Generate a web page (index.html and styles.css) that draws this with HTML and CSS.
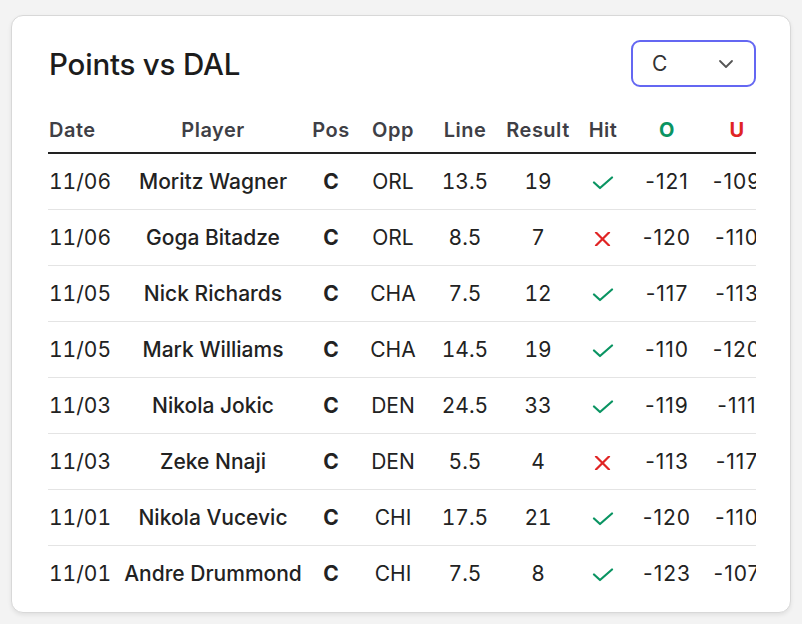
FILE: index.html
```html
<!DOCTYPE html>
<html>
<head>
<meta charset="utf-8">
<link rel="stylesheet" href="styles.css">
</head>
<body>
<div class="card">
  <div class="card-head">
    <h2 class="title">Points vs DAL</h2>
    <div class="select">
      <span class="select-value">C</span>
      <svg class="chev" width="16" height="10" viewBox="0 0 16 10"><path d="M2 2 L8 8 L14 2" fill="none" stroke="#555" stroke-width="1.8" stroke-linecap="round" stroke-linejoin="round"/></svg>
    </div>
  </div>
  <div class="scroller">
    <table class="tbl">
      <colgroup>
        <col class="c-date"><col class="c-player"><col class="c-pos"><col class="c-opp"><col class="c-line"><col class="c-res"><col class="c-hit"><col class="c-o"><col class="c-u">
      </colgroup>
      <thead>
        <tr>
          <th class="left">Date</th><th>Player</th><th>Pos</th><th>Opp</th><th>Line</th><th>Result</th><th>Hit</th><th class="over">O</th><th class="under">U</th>
        </tr>
      </thead>
      <tbody>
        <tr><td class="left">11/06</td><td class="name">Moritz Wagner</td><td class="pos">C</td><td>ORL</td><td>13.5</td><td>19</td><td><svg class="ico" viewBox="0 0 22 14" width="22" height="14"><path d="M2 6.5 L8 12 L20 1.5" fill="none" stroke="#0a9462" stroke-width="2.2" stroke-linecap="round" stroke-linejoin="round"/></svg></td><td class="odds">-121</td><td class="odds">-109</td></tr>
        <tr><td class="left">11/06</td><td class="name">Goga Bitadze</td><td class="pos">C</td><td>ORL</td><td>8.5</td><td>7</td><td><svg class="ico" viewBox="0 0 22 14" width="22" height="14"><path d="M4 0.5 L17 13.5 M17 0.5 L4 13.5" fill="none" stroke="#e02424" stroke-width="2.2" stroke-linecap="round"/></svg></td><td class="odds">-120</td><td class="odds">-110</td></tr>
        <tr><td class="left">11/05</td><td class="name">Nick Richards</td><td class="pos">C</td><td>CHA</td><td>7.5</td><td>12</td><td><svg class="ico" viewBox="0 0 22 14" width="22" height="14"><path d="M2 6.5 L8 12 L20 1.5" fill="none" stroke="#0a9462" stroke-width="2.2" stroke-linecap="round" stroke-linejoin="round"/></svg></td><td class="odds">-117</td><td class="odds">-113</td></tr>
        <tr><td class="left">11/05</td><td class="name">Mark Williams</td><td class="pos">C</td><td>CHA</td><td>14.5</td><td>19</td><td><svg class="ico" viewBox="0 0 22 14" width="22" height="14"><path d="M2 6.5 L8 12 L20 1.5" fill="none" stroke="#0a9462" stroke-width="2.2" stroke-linecap="round" stroke-linejoin="round"/></svg></td><td class="odds">-110</td><td class="odds">-120</td></tr>
        <tr><td class="left">11/03</td><td class="name">Nikola Jokic</td><td class="pos">C</td><td>DEN</td><td>24.5</td><td>33</td><td><svg class="ico" viewBox="0 0 22 14" width="22" height="14"><path d="M2 6.5 L8 12 L20 1.5" fill="none" stroke="#0a9462" stroke-width="2.2" stroke-linecap="round" stroke-linejoin="round"/></svg></td><td class="odds">-119</td><td class="odds">-111</td></tr>
        <tr><td class="left">11/03</td><td class="name">Zeke Nnaji</td><td class="pos">C</td><td>DEN</td><td>5.5</td><td>4</td><td><svg class="ico" viewBox="0 0 22 14" width="22" height="14"><path d="M4 0.5 L17 13.5 M17 0.5 L4 13.5" fill="none" stroke="#e02424" stroke-width="2.2" stroke-linecap="round"/></svg></td><td class="odds">-113</td><td class="odds">-117</td></tr>
        <tr><td class="left">11/01</td><td class="name">Nikola Vucevic</td><td class="pos">C</td><td>CHI</td><td>17.5</td><td>21</td><td><svg class="ico" viewBox="0 0 22 14" width="22" height="14"><path d="M2 6.5 L8 12 L20 1.5" fill="none" stroke="#0a9462" stroke-width="2.2" stroke-linecap="round" stroke-linejoin="round"/></svg></td><td class="odds">-120</td><td class="odds">-110</td></tr>
        <tr class="last"><td class="left">11/01</td><td class="name">Andre Drummond</td><td class="pos">C</td><td>CHI</td><td>7.5</td><td>8</td><td><svg class="ico" viewBox="0 0 22 14" width="22" height="14"><path d="M2 6.5 L8 12 L20 1.5" fill="none" stroke="#0a9462" stroke-width="2.2" stroke-linecap="round" stroke-linejoin="round"/></svg></td><td class="odds">-123</td><td class="odds">-107</td></tr>
      </tbody>
    </table>
  </div>
</div>
</body>
</html>
```
FILE: styles.css
```css
* { box-sizing: border-box; }
html, body { margin: 0; padding: 0; }
body {
  background: #f3f3f3;
  font-family: Inter, "Noto Sans", "Liberation Sans", sans-serif;
  color: #222;
  width: 802px;
  height: 624px;
  overflow: hidden;
}
.card {
  margin: 15px 11px 0 11px;
  width: 780px;
  height: 598px;
  background: #fff;
  border: 1px solid #d8d8d8;
  border-radius: 12px;
  box-shadow: 0 2px 4px rgba(0,0,0,0.08);
  padding: 24px 34px 11px 36px;
}
.card-head {
  display: flex;
  align-items: center;
  justify-content: space-between;
  height: 47px;
}
.title {
  margin: 0 0 0 1px;
  font-size: 29.5px;
  font-weight: 500;
  color: #1c1c1c;
  letter-spacing: -0.2px;
}
.select {
  width: 125px;
  height: 47px;
  border: 2px solid #6467f2;
  border-radius: 9px;
  display: flex;
  align-items: center;
  justify-content: space-between;
  padding: 0 20px 0 19px;
}
.select-value {
  font-size: 21px;
  color: #333;
}
.chev { display: block; margin-top: 1px; }
.scroller {
  margin-top: 21px;
  width: 708px;
  overflow: hidden;
}
.tbl {
  border-collapse: collapse;
  table-layout: fixed;
  width: 724px;
}
.c-date { width: 74px; }
.c-player { width: 182px; }
.c-pos { width: 54px; }
.c-opp { width: 70px; }
.c-line { width: 74px; }
.c-res { width: 72px; }
.c-hit { width: 58px; }
.c-o { width: 70px; }
.c-u { width: 70px; }
.tbl th {
  height: 45px;
  padding: 0;
  font-size: 20px;
  letter-spacing: 0.5px;
  font-weight: 600;
  color: #3f3f46;
  text-align: center;
  vertical-align: middle;
  white-space: nowrap;
  border-bottom: 2px solid #222;
}
.tbl td {
  height: 56px;
  padding: 0;
  font-size: 21px;
  font-variant-numeric: tabular-nums;
  text-align: center;
  vertical-align: middle;
  white-space: nowrap;
  border-bottom: 1px solid #e4e4e4;
  color: #222;
}
.tbl td.odds {
  font-variant-numeric: normal;
  letter-spacing: 1px;
}
.tbl tr.last td { border-bottom: none; }
.tbl .left { text-align: left; padding-left: 1px; }
.tbl td.name { font-weight: 500; }
.tbl td.pos { font-weight: 700; }
.tbl th.over { color: #0a9462; font-weight: 700; }
.tbl th.under { color: #e02424; font-weight: 700; }
.ico { display: inline-block; vertical-align: middle; }
```
